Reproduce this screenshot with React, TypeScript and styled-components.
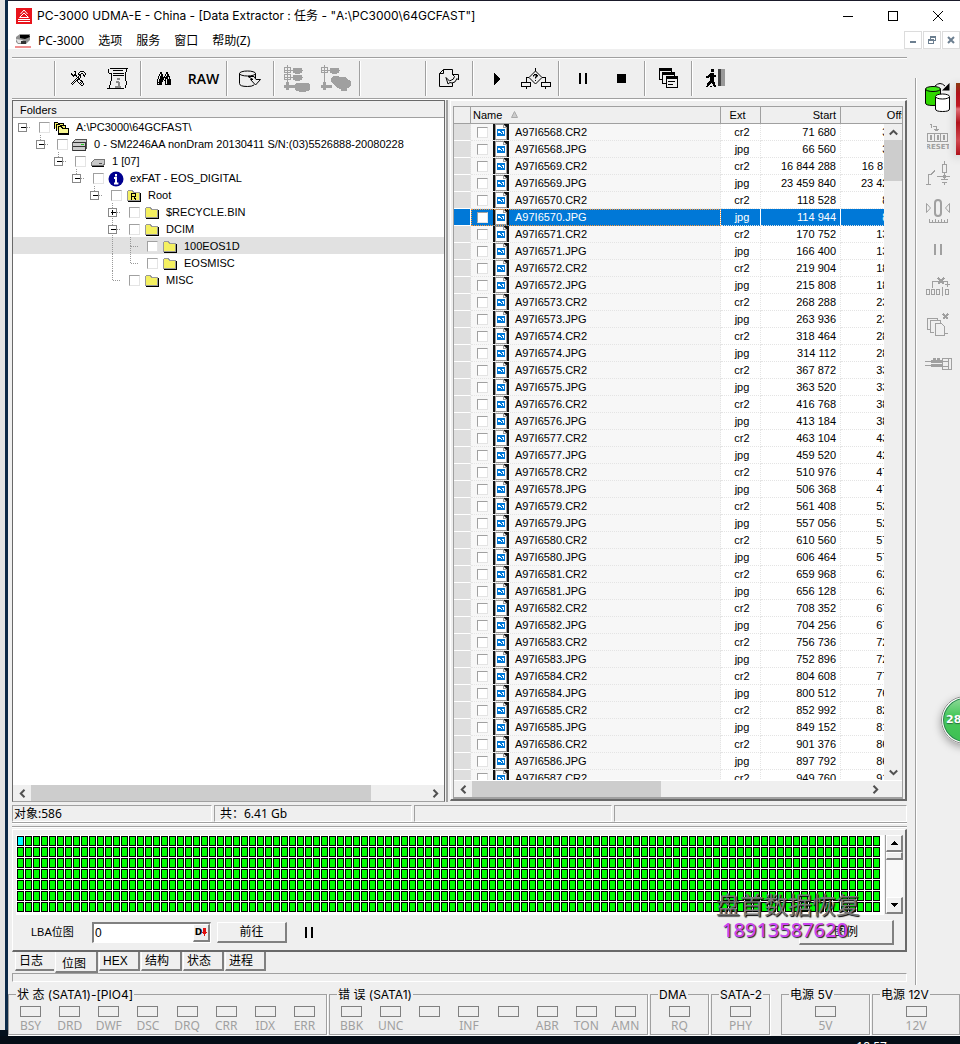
import React from "react";
import styled, { createGlobalStyle, css } from "styled-components";

const GlobalStyle = createGlobalStyle`
  *, *::before, *::after { box-sizing: border-box; }
  body { margin: 0; background: #04101c; }
  button, input { font: inherit; color: inherit; margin: 0; }
  button { padding: 0; border: 0; background: none; }
  svg { display: block; flex: none; }
`;

const face = "#efefef";
const shade = "#a0a0a0";
const dark = "#696969";
const uiFont = `"Noto Sans", "Noto Sans CJK SC", sans-serif`;
const captionFont = `Inter, "Noto Sans CJK SC", sans-serif`;
const listFont = `"Liberation Sans", "Noto Sans CJK SC", sans-serif`;

/* ---------- desktop and window ---------- */

const Desktop = styled.div`
  position: relative;
  display: flex;
  flex-direction: column;
  height: 100vh;
  min-height: 700px;
  overflow: hidden;
  font: 12px/16px ${uiFont};
  color: #000;
`;

const Stage = styled.div`
  display: flex;
  flex: 1;
  min-height: 0;
`;

const BackWindow = styled.div`
  width: 8px;
  margin-bottom: 6px;
  background: #e4e4e4;
  border-right: 3px solid #0c2a48;
`;

const Window = styled.main`
  flex: 1;
  min-width: 0;
  display: flex;
  flex-direction: column;
  background: ${face};
  border-top: 1px solid #1a1a2a;
`;

const Taskbar = styled.footer`
  height: 8px;
  overflow: hidden;
  background: #050d16;
  color: #fff;
  padding: 3px 73px 0 0;
  text-align: right;
`;

const TitleBar = styled.header`
  display: flex;
  align-items: center;
  height: 30px;
  padding-left: 8px;
  background: #fff;
`;

const Title = styled.h1`
  flex: 1;
  margin: 0 0 0 5px;
  font: 400 12px/16px ${captionFont};
  white-space: nowrap;
`;

const CaptionButton = styled.button`
  display: grid;
  place-items: center;
  width: 45px;
  height: 30px;
`;

const MenuBar = styled.nav`
  display: flex;
  align-items: center;
  height: 18px;
  padding-left: 7px;
  background: #fff;
`;

const MenuItem = styled.button`
  margin: 0 7px;
  padding-top: 2px;
  white-space: nowrap;
`;

const MdiButtons = styled.div`
  display: flex;
  gap: 1px;
  margin-left: auto;
`;

const MdiButton = styled.button`
  display: grid;
  place-items: center;
  width: 18px;
  height: 18px;
  border: 1px solid #dcdcdc;
  background: #fff;
`;

const Body = styled.div`
  display: flex;
  flex: 1;
  min-height: 0;
`;

const MainColumn = styled.div`
  flex: 1;
  min-width: 0;
  display: flex;
  flex-direction: column;
  padding: 8px 8px 4px 4px;
`;

/* ---------- toolbar ---------- */

const Toolbar = styled.div`
  display: flex;
  align-items: center;
  height: 43px;
  flex: none;
  border-top: 1px solid ${shade};
  border-bottom: 1px solid #fff;
  box-shadow: inset 0 1px #fff, inset 0 -1px ${shade};
`;

const ToolGroup = styled.div<{ $empty?: number }>`
  display: flex;
  height: 35px;
  padding: 0 3px 0 4px;
  border-right: 1px solid ${shade};
  box-shadow: 1px 0 #fff;
  ${(p) => p.$empty && css`width: ${p.$empty}px;`}
  &:last-child { border: 0; box-shadow: none; }
`;

const ToolButton = styled.button`
  display: grid;
  place-items: center;
  width: 39px;
  height: 35px;
  font: 600 14px/16px "Open Sans", sans-serif;
`;

/* ---------- workspace ---------- */

const Workspace = styled.div`
  flex: 1;
  min-height: 0;
  display: grid;
  grid-template-columns: 433fr 5px 457fr;
  grid-template-rows: minmax(0, 1fr);
`;

const Splitter = styled.div`
  border-left: 2px solid ${shade};
  margin-left: 1px;
`;

const FolderPanel = styled.section`
  display: flex;
  flex-direction: column;
  min-width: 0;
  border: 1px solid ${dark};
  border-bottom-color: ${shade};
  background: #fff;
  font: 11px/17px ${listFont};
`;

const PanelHeading = styled.h2`
  margin: 0;
  height: 17px;
  padding-left: 7px;
  font-size: 11px;
  font-weight: 400;
  line-height: 19px;
  background: ${face};
  border-bottom: 1px solid ${shade};
`;

const Tree = styled.ul`
  flex: 1;
  min-height: 0;
  overflow: hidden;
  list-style: none;
  margin: 0;
  padding: 0;
`;

const TreeRow = styled.li<{ $selected?: boolean }>`
  display: flex;
  align-items: center;
  height: 17px;
  background: ${(p) => (p.$selected ? "#e1e1e1" : "transparent")};
`;

const TreeLabel = styled.label`
  display: flex;
  align-items: center;
  padding: 2px 0 0 8px;
  white-space: nowrap;
  svg { margin: 0 6px 0 4px; }
`;

const Tick = styled.input.attrs({ type: "checkbox" })`
  appearance: none;
  width: 11px;
  height: 11px;
  flex: none;
  background: #fff;
  border: 1px solid #e4e4e4;
  border-top-color: ${shade};
  border-left-color: ${shade};
`;

const HScroll = styled.div`
  display: flex;
  height: 16px;
  flex: none;
  background: ${face};
`;

const ScrollArrow = styled.button`
  display: grid;
  place-items: center;
  width: 18px;
  height: 16px;
  flex: none;
`;

const ScrollTrack = styled.div<{ $vertical?: boolean }>`
  flex: 1;
  display: flex;
  flex-direction: ${(p) => (p.$vertical ? "column" : "row")};
`;

const Thumb = styled.div<{ $size: string }>`
  flex: 0 0 ${(p) => p.$size};
  background: #cdcdcd;
`;

const FileFrame = styled.section`
  display: flex;
  min-width: 0;
  margin-bottom: 1px;
  padding: 5px 2px 0 2px;
  border: 1px solid #fff;
  border-right: 2px solid ${dark};
  border-bottom: 2px solid ${dark};
`;

const FileList = styled.div`
  position: relative;
  flex: 1;
  min-width: 0;
  display: flex;
  flex-direction: column;
  border: 1px solid ${shade};
  border-bottom-width: 2px;
  background: ${face};
  font: 11px/16px ${listFont};
`;

const TableClip = styled.div`
  flex: 1;
  min-height: 0;
  overflow: hidden;
  border-bottom: 1px solid #fff;
`;

const FileTable = styled.table`
  width: calc(100% + 19px);
  table-layout: fixed;
  border-collapse: separate;
  border-spacing: 0;
`;

const Head = styled.th<{ $align?: string }>`
  height: 17px;
  padding: 0 4px 0 2px;
  ${(p) => p.$align === "center" && css`padding: 0 6px 0 0;`}
  font-weight: 400;
  text-align: ${(p) => p.$align || "left"};
  border-right: 1px solid ${shade};
  border-bottom: 1px solid ${shade};
  background: ${face};
  line-height: 16px;
  svg { display: inline-block; margin-left: 9px; vertical-align: 1px; }
`;

const Cell = styled.td<{ $align?: string }>`
  height: 17px;
  padding: 0 4px;
  ${(p) => p.$align === "center" && css`padding-left: 7px;`}
  line-height: 16px;
  text-align: ${(p) => p.$align || "left"};
  background: #fff;
  border-right: 1px dotted #e4e4e4;
  border-bottom: 1px dotted #e4e4e4;
  white-space: nowrap;
`;

const MarkCell = styled(Cell)`
  background: #dedede;
  border-bottom: 1px solid #fff;
`;

const NameCell = styled(Cell)`
  background: #f7f7f7;
  padding-left: 6px;
  label { display: flex; align-items: center; height: 16px; }
  svg { margin: 0 6px 0 5px; }
`;

const FileRow = styled.tr<{ $selected?: boolean }>`
  ${(p) =>
    p.$selected &&
    css`
      ${Cell} {
        background: #0078d7;
        color: #fff;
        border-right: 1px solid #fff;
      }
      ${NameCell} { outline: 1px dotted #ff9a3c; outline-offset: -1px; }
    `}
`;

const ListVScroll = styled.div`
  position: absolute;
  top: 17px;
  right: 0;
  bottom: 17px;
  width: 18px;
  display: flex;
  flex-direction: column;
  background: ${face};
`;

/* ---------- status and bitmap ---------- */

const StatusBar = styled.div`
  display: grid;
  grid-template-columns: 200fr 198fr 198fr 293fr;
  gap: 2px;
  height: 17px;
  flex: none;
  margin-top: 3px;
`;

const StatusCell = styled.div<{ $indent?: boolean }>`
  padding-left: ${(p) => (p.$indent ? "5px" : "1px")};
  border: 1px solid #fff;
  border-top-color: ${shade};
  border-left-color: ${shade};
  line-height: 15px;
`;

const GrooveLine = styled.div`
  flex: none;
  border-top: 1px solid ${shade};
  border-bottom: 1px solid #fff;
  height: 2px;
  & + & { margin-top: 2px; }
`;

const MapFrame = styled.section`
  position: relative;
  flex: none;
  margin-top: 1px;
  padding: 5px 2px 1px 3px;
  border-top: 1px solid #fff;
  border-left: 1px solid #fff;
  border-right: 2px solid ${dark};
  border-bottom: 2px solid ${dark};
`;

const MapRow = styled.div`
  display: flex;
  gap: 1px;
  height: 80px;
`;

const SectorGrid = styled.div`
  flex: 1;
  display: grid;
  grid-template-columns: repeat(auto-fill, 7px);
  grid-auto-rows: 10px;
  gap: 1px;
  overflow: hidden;
  padding: 1px;
  background: #fff;
`;

const Sector = styled.div<{ $current?: boolean }>`
  border: 1px solid #000;
  background: ${(p) => (p.$current ? "#00ffff" : "#00ff00")};
`;

const raised = css`
  background: ${face};
  border: 1px solid #fff;
  border-right: 2px solid #808080;
  border-bottom: 2px solid #808080;
`;

const ClassicVScroll = styled.div`
  width: 18px;
  height: 79px;
  display: flex;
  flex-direction: column;
  background: #f8f8f8;
  border-left: 1px solid ${shade};
`;

const ClassicArrow = styled.button`
  ${raised}
  display: grid;
  place-items: center;
  height: 17px;
`;

const ClassicThumb = styled.div`
  ${raised}
  height: 8px;
  margin-bottom: auto;
`;

const MapControls = styled.div`
  display: flex;
  align-items: center;
  height: 34px;
  padding: 0 9px 0 15px;
  font: 12px/16px ${listFont};
`;

const LbaLabel = styled.label`
  width: 61px;
  font-size: 11px;
`;

const LbaField = styled.div`
  display: flex;
  width: 119px;
  height: 21px;
  margin-right: 6px;
  background: #fff;
  border: 2px solid #808080;
  border-right: 1px solid #fff;
  border-bottom: 1px solid #fff;
`;

const LbaInput = styled.input`
  flex: 1;
  min-width: 0;
  padding: 0 1px;
  border: 0;
  outline: 0;
  background: #fff;
`;

const RadixButton = styled.button`
  ${raised}
  display: flex;
  align-items: center;
  justify-content: center;
  width: 17px;
  font: 700 9px/12px "DejaVu Sans", sans-serif;
`;

const PushButton = styled.button<{ $wide?: boolean }>`
  ${raised}
  width: ${(p) => (p.$wide ? "95px" : "70px")};
  height: ${(p) => (p.$wide ? "25px" : "21px")};
  margin-left: ${(p) => (p.$wide ? "auto" : "0")};
  line-height: 18px;
`;

const PauseButton = styled.button`
  margin-left: 18px;
`;

const Watermark = styled.div`
  position: absolute;
  right: 45px;
  bottom: 8px;
  text-align: center;
  pointer-events: none;
  color: #777;
  font: 24px/28px "Noto Sans CJK SC", sans-serif;
  text-shadow: 1px 1px 1px #000;
`;

const WatermarkPhone = styled.div`
  margin-right: 6px;
  color: #cc44f0;
  font: 500 20px/24px "Noto Sans", sans-serif;
  text-shadow: 1px 1px 1px #222;
`;

const Tabs = styled.div`
  display: flex;
  align-items: flex-start;
  gap: 1px;
  height: 21px;
  flex: none;
  padding-left: 3px;
  font: 12px/19px ${listFont};
`;

const Tab = styled.button<{ $active?: boolean }>`
  height: ${(p) => (p.$active ? "21px" : "19px")};
  width: ${(p) => (p.$active ? "43px" : "41px")};
  padding: ${(p) => (p.$active ? "3px 8px 0 6px" : "0 8px 0 3px")};
  text-align: left;
  white-space: nowrap;
  border: 1px solid #fff;
  border-top: 0;
  border-right: 2px solid #808080;
  border-bottom: 2px solid #808080;
  &:first-child { width: 39px; border-right: 0; }
`;

const Sunken = styled.div`
  flex: none;
  height: 9px;
  border: 1px solid #fff;
  border-top-color: ${shade};
  border-left-color: ${shade};
`;

/* ---------- side bar ---------- */

const SideBar = styled.aside`
  width: 45px;
  margin: 29px 0 1px;
  border-left: 1px solid ${shade};
  box-shadow: inset 1px 0 #fff;
`;

const SideButton = styled.button`
  display: grid;
  place-items: center;
  width: 44px;
  height: 38px;
`;

/* ---------- indicator groups ---------- */

const Groups = styled.div`
  display: grid;
  grid-template-columns:
    minmax(0, 319fr) minmax(0, 319fr) minmax(0, 59fr)
    minmax(0, 59fr) minmax(0, 98fr) minmax(0, 88fr);
  gap: 2px;
  height: 49px;
  flex: none;
  margin-bottom: 1px;
`;

const Group = styled.fieldset<{ $spaced?: boolean }>`
  min-width: 0;
  margin: 0 0 0 ${(p) => (p.$spaced ? "9px" : "0")};
  padding: 0 2px;
  border: 1px solid ${shade};
  box-shadow: 1px 1px #fff;
`;

const Legend = styled.legend`
  margin-left: 5px;
  padding: 1px 1px 0;
  font: 12px/15px ${captionFont};
  white-space: nowrap;
`;

const Leds = styled.div`
  display: flex;
  padding-top: 4px;
`;

const LedItem = styled.div`
  flex: 1;
  min-width: 0;
  display: flex;
  flex-direction: column;
  align-items: center;
  gap: 1px;
  color: #a0a0a0;
`;

const Led = styled.span`
  width: 21px;
  height: 11px;
  border: 1px solid #808080;
`;

/* ---------- floating desktop widgets ---------- */

const RedWidget = styled.div`
  position: absolute;
  top: 83px;
  right: 0;
  width: 4px;
  height: 72px;
  background: linear-gradient(#8a3a10, #b0121c 14%, #c01824 32%, #e07078 36%, #b0121c 55%, #d04850 80%, #b0121c);
  box-shadow: 0 2px 10px rgba(0, 0, 0, 0.3);
`;

const Ball = styled.div`
  position: absolute;
  top: 696px;
  right: -29px;
  width: 48px;
  height: 48px;
  padding-left: 3px;
  border-radius: 50%;
  border: 2px solid #fff;
  outline: 1px solid #8a8a8a;
  outline-offset: -1px;
  background: linear-gradient(#8fd99a, #48c85c 40%, #3cbf52);
  box-shadow: 0 3px 8px rgba(0, 0, 0, 0.35), inset 0 0 0 1px #2a8050;
  color: #fff;
  font: 700 11px/44px "DejaVu Sans", sans-serif;
  text-shadow: 0 1px 1px #2a7040;
`;

/* ---------- icons ---------- */

type IconProps = {
  w: number;
  h: number;
  children: React.ReactNode;
  stroke?: string;
  smooth?: boolean;
};

const Icon = ({ w, h, children, stroke = "#000", smooth }: IconProps) => (
  <svg
    width={w}
    height={h}
    viewBox={`0 0 ${w} ${h}`}
    fill="none"
    stroke={stroke}
    shapeRendering={smooth ? "auto" : "crispEdges"}
    aria-hidden="true"
  >
    {children}
  </svg>
);

/* Turns rows of characters into unit squares; '.' is transparent. */
const Bitmap = ({ rows, colors }: { rows: string[]; colors: Record<string, string> }) => (
  <svg width={rows[0].length} height={rows.length} shapeRendering="crispEdges" aria-hidden="true">
    {Object.keys(colors).map((key) => (
      <path
        key={key}
        fill={colors[key]}
        d={rows
          .flatMap((row, y) => row.split("").map((c, x) => (c === key ? `M${x} ${y}h1v1h-1z` : "")))
          .join("")}
      />
    ))}
  </svg>
);

const AppIcon = () => (
  <Icon w={16} h={16} stroke="#fff" smooth>
    <rect width="16" height="16" fill="#e8141c" stroke="none" />
    <path d="M8 2 4.500 6M8 2l3.500 4M8 5 3.500 9.500h9zM2 11.500h12M2 13.500h12" />
  </Icon>
);

const DriveIcon = () => (
  <Icon w={16} h={15} stroke="none" smooth>
    <path d="M1 4 5 1h10v6l-4 4H3L1 9z" fill="#909090" />
    <path d="M5 2h9l1 2-5 2-5-1z" fill="#000" />
    <path d="M1 6l6 1 4 3H3z" fill="#e4e4e4" />
    <path d="M6 8h5v3H6z" fill="#333" />
    <path d="M0 14h16" stroke="#e02020" />
  </Icon>
);

const ToolsIcon = () => (
  <Bitmap
    colors={{ "#": "#000" }}
    rows={[
      "...##....####...",
      "....#...#....#..",
      "#...#..#..##..#.",
      "##.##..###..#.#.",
      ".#####..##..##..",
      "..#..#.#.#...#..",
      "......##.#......",
      ".....#.##.......",
      "....#.###.......",
      "...#.##..##.....",
      "..#.#.#...##....",
      ".#.#...#.#.#....",
      "#.#.....#.#.#...",
      ".#.......#..#...",
      "..........##....",
    ]}
  />
);

const ScriptIcon = () => (
  <Icon w={23} h={23}>
    <path d="M4 1.500h18M2.500 2v4M3 6.500h3M5.500 7v7M4.500 14v4M3.500 18v3M1 21.500h17M20.500 2v3M19.500 5v9M20.500 14v4M19.500 18v3" />
    <path d="M7 3.500h10M7 6.500h11M7 8.500h11" />
    <path d="M11 12h3M10 15h3M9 20h6M12.500 15v5" stroke="#888" strokeWidth="2" />
  </Icon>
);

const BinocularsIcon = () => (
  <Bitmap
    colors={{ "#": "#000" }}
    rows={[
      "...##....##....",
      "...##....##....",
      "..#.##..#.##...",
      "..#.##..#.##...",
      ".#.###.#.####..",
      ".#.########.#..",
      ".#.####.###.#..",
      "#.#####.#.####.",
      "#.####.##.####.",
      "#.####..#.####.",
      "#####...#.####.",
      "#.###...#.####.",
      "#####...######.",
    ]}
  />
);

const DiskExportIcon = () => (
  <Icon w={23} h={18} smooth>
    <path d="M.5 3.500v10q0 3 8 3 4.500 0 6.500-1.500M16.500 3.500v5" />
    <ellipse cx="8.500" cy="3.500" rx="8" ry="2.500" />
    <path d="M9 6.500h6l2 3h4.500l-5 5.500-5-5.500h2.500z" fill={face} />
  </Icon>
);

const TreeAddIcon = ({ big }: { big?: boolean }) => (
  <Icon w={big ? 31 : 27} h={27} stroke="#a0a0a0">
    <path d="M3.500 0v22M.5 2.500h6v5h-6zM0 5.500h11" />
    {!big && <path d="M.5 9.500h6v5h-6zM0 12.500h11" />}
    <path d="M0 21.500h11M3.500 17v8" strokeWidth="3" />
    <rect x="9" y="3" width="9" height="5" rx="2" fill="#a0a0a0" />
    {big ? (
      <path
        d="M10 13q4-4 9-1 6-1 8 3 5 1 3 5-1 3-4 3v3h-6v-2q-6-1-7-5-4-1-3-6z"
        fill="#a0a0a0"
        stroke="none"
      />
    ) : (
      <>
        <rect x="9" y="10" width="9" height="5" rx="2" fill="#a0a0a0" />
        <rect x="11" y="18" width="15" height="8" rx="4" fill="#a0a0a0" />
      </>
    )}
  </Icon>
);

const PageReturnIcon = () => (
  <Icon w={21} h={19} smooth>
    <path d="M13.500 6V.5h-9l-4 4v13h13V14M4.500.5v4h-4" />
    <path d="M7 8.500l3.500 3.500 2-1q2 0 3-3.500l-2-2h6v5.500l-1.500-1.500q-1.500 4.500-5 4.500l-2-.500-2 1.500z" fill={face} />
  </Icon>
);

const DecisionIcon = () => (
  <svg width="30" height="22" fill="none" stroke="#000" aria-hidden="true">
    <path d="M14.500 0v3M8 9.500 14.500 3 21 9.500 14.500 16z" />
    <path
      d="M5.500 14V9.500H8M24.500 14V9.500H21M.5 14.500h9v4h-9zM20.500 14.500h9v4h-9zM5.500 19v2M24.500 19v2"
      shapeRendering="crispEdges"
    />
    <path d="M12 7h1V6h3v1h1v1.500h-1v1h-1v1h-1v-2h1v-1h-2v1h-1zM14 12h1v1h-1z" fill="#000" stroke="none" />
  </svg>
);

const PlayIcon = () => (
  <Icon w={8} h={12} stroke="none">
    <path d="M1 0l6 6-6 6z" fill="#000" />
  </Icon>
);

const PauseIcon = ({ color = "#000" }: { color?: string }) => (
  <Icon w={8} h={11} stroke={color}>
    <path d="M1 0v11M7 0v11" strokeWidth="2" />
  </Icon>
);

const StopIcon = () => (
  <Icon w={9} h={9} stroke="none">
    <rect width="9" height="9" fill="#000" />
  </Icon>
);

const CascadeIcon = () => (
  <Icon w={20} h={21}>
    <path d="M.5 11.500V.5h12v3M.5 2.500h12M.5 11.500H3" />
    <path d="M3.500 15.500v-11h12v3M3.500 6.500h12M3.500 15.500H7" />
    <path d="M7.500 8.500h11v11h-11zM8 10.500h11M9 13.500h7M9 16.500h5" />
    <path d="M0 1.500h13M3 5.500h13M7 9.500h12" />
  </Icon>
);

const ExitIcon = () => (
  <Icon w={19} h={19} stroke="none">
    <path
      d="M5 0h3v3H5zM4 4h4v2h2v2H8v3l1 3 1 3H7l-1-4-3 4H1v-2l3-4V8L2 9H0V7h2zM0 17h2v1H0zM4 17h2v1H4zM8 17h2v1H8z"
      fill="#000"
    />
    <path d="M12 0h3v17h-3z" fill="#444" />
    <path d="M15 0h4v17h-4z" fill="#999" />
  </Icon>
);

const FolderIcon = ({ letter }: { letter?: boolean }) => (
  <Icon w={16} h={14}>
    <path d="M1.500 11.500v-9l1-1h4l1 2h6v8z" fill="#f4f060" stroke="#999" />
    <path d="M2 12.500h12.500V4" stroke="#000" />
    {letter && <path d="M5.500 11V4.500h4v3h-4M8 8l2 3" />}
  </Icon>
);

const FoldersIcon = () => (
  <Icon w={16} h={14}>
    <path d="M.5 7.500v-6h3l1 1h5v2" fill="#f4f060" />
    <path d="M2.500 9.500v-6h3l1 1h5v2" fill="#f4f060" />
    <path d="M4.500 12.500v-7h3l1 2h6v5z" fill="#f8f690" />
    <path d="M4 13.500h11" />
  </Icon>
);

const DiskIcon = ({ flat }: { flat?: boolean }) => (
  <Icon w={16} h={14}>
    {flat ? (
      <>
        <path d="M1.500 7.500l3-3h10v4l-1 2h-12z" fill="#c8c8c8" stroke="#777" />
        <path d="M2 11.500h12" />
        <path d="M9 8.500h3" stroke="#555" />
      </>
    ) : (
      <>
        <path d="M.5 4.500l3-3h11v9l-2 2h-12z" fill="#ccc" stroke="#555" />
        <path d="M1 4.500h12M1 8.500h12M13.500 4v8M1 12.500h13" stroke="#333" />
        <path d="M9 6.500h3" stroke="#2c2" />
      </>
    )}
  </Icon>
);

const InfoIcon = () => (
  <Icon w={16} h={16} smooth stroke="#fff">
    <circle cx="8" cy="8" r="7.500" fill="#000090" stroke="none" />
    <path d="M8 3v2.400M6 7h2v5M6 12.400h4.400" strokeWidth="2" />
  </Icon>
);

const PhotoIcon = () => (
  <Icon w={16} h={16} stroke="none">
    <rect width="16" height="16" fill="#111" />
    <path d="M2.500.5h8l3 3v12h-11z" fill="#fff" stroke="#999" />
    <path d="M10 1h1v2h2v1h-3z" fill="#999" />
    <rect x="4" y="5" width="8" height="7" fill="#0078d7" />
    <path d="M5 9V7h2v1h1v1h1V7h2v3h-1V8h-1v2H8V9H6z" fill="#fff" />
  </Icon>
);

const Chevron = ({ d }: { d: string }) => (
  <Icon w={9} h={9} stroke="#505050" smooth>
    <path d={d} strokeWidth="2" />
  </Icon>
);
const chevrons = {
  left: "M6.5.8 2.8 4.5l3.7 3.7",
  right: "M2.5.8l3.7 3.7-3.7 3.7",
  up: "M.8 6.5 4.5 2.8l3.7 3.7",
  down: "M.8 2.5l3.7 3.7 3.7-3.7",
};

const CopyDisksIcon = () => (
  <Icon w={26} h={31} smooth>
    <path d="M10 4q5-5 10 0" />
    <path d="M24.500 1v7.500H17z" fill="#000" stroke="none" />
    <path d="M.5 7v14q0 2.500 7.500 2.500T15.500 21V7" fill="#30d800" />
    <ellipse cx="8" cy="7" rx="7.500" ry="2.500" fill="#40e818" />
    <path d="M10.500 15v12q0 2.500 7 2.500t7-2.500V15" fill="#fff" />
    <ellipse cx="17.500" cy="14.500" rx="7" ry="2.500" fill="#fff" />
  </Icon>
);

const ResetIcon = () => (
  <svg width="22" height="27" shapeRendering="crispEdges" fill="none" stroke={shade} aria-hidden="true">
    <path d="M3 2.500h1.500V6M6 4.500h3.500V9M7 7.500h5M8 8.500h3M.5 11.500h20v8H.5zM7.500 11v8M13.500 11v8M3.500 13.500h1v4h-1zM10.500 13.500h1v4h-1zM16.500 13.500h1v4h-1z" />
    <text x="11" y="27" textAnchor="middle" fill={shade} stroke="none" fontFamily="DejaVu Sans" fontSize="7" fontWeight="700">
      RESET
    </text>
  </svg>
);

const SwitchIcon = () => (
  <Icon w={24} h={25} stroke={shade}>
    <path d="M0 23.500h5M2.500 23V13.500H5l4-4M18.500 0v3M16.500 3.500h4v8h-4zM18.500 12v6M11 15.500h13M15 18.500h7M16 21.500h5M18.500 21v3M17 14.500h3M17 16.500h3" />
  </Icon>
);

const ZeroIcon = () => (
  <Icon w={24} h={26} stroke={shade} smooth>
    <path d="M.5 5.500v9l4-4.500zM23.500 5.500v9l-4-4.500z" />
    <path
      d="M3.500 21v3.500h18V21M6.500 22v2M9.500 21v3M12.500 22v2M15.500 21v3M18.500 22v2"
      shapeRendering="crispEdges"
    />
    <rect x="9" y="2" width="6" height="16" rx="3" strokeWidth="2" />
  </Icon>
);

const BlocksIcon = () => (
  <Icon w={24} h={20} stroke={shade}>
    <path d="M.5 12.500h3v5h-3zM5.500 12.500h3v5h-3zM10.500 12.500h3v5h-3zM16.500 10v9M19.500 12.500h3v5h-3zM6.500 11V4.500h15V10M19 7.500h5" />
    <path d="M12 1l6 6M18 1l-6 6" strokeWidth="2" />
  </Icon>
);

const PagesIcon = () => (
  <Icon w={24} h={25} stroke={shade}>
    <path d="M4.500 16.500h-3v-11h10v2M7.500 19.500h-3v-12h10v2M9.500 22.500v-12h6l3 3v9zM18 20.500h4" />
    <path d="M17 1l5 5M22 1l-5 5" strokeWidth="2" />
  </Icon>
);

const PlugIcon = () => (
  <Icon w={27} h={13} stroke={shade}>
    <path d="M0 4.500h8M0 8.500h8M17 4.500h6M17 9.500h6M17.500 1v11M23.500 1v11M17 1.500h10M17 12.500h10M26.500 1v11" />
    <path d="M6 4h11M6 8.500h11M9 1v2M13 1v2" strokeWidth="3" />
  </Icon>
);

/* ---------- data ---------- */

type Node = {
  id: string;
  level: number;
  text: string;
  icon: React.ReactNode;
  box?: "+" | "-";
  down?: boolean;
  through?: number;
  selected?: boolean;
};

const nodes: Node[] = [
  { id: "task", level: 0, text: "A:\\PC3000\\64GCFAST\\", icon: <FoldersIcon />, box: "-" },
  { id: "disk", level: 1, text: "0 - SM2246AA nonDram 20130411 S/N:(03)5526888-20080228", icon: <DiskIcon />, box: "-" },
  { id: "part", level: 2, text: "1 [07]", icon: <DiskIcon flat />, box: "-" },
  { id: "vol", level: 3, text: "exFAT - EOS_DIGITAL", icon: <InfoIcon />, box: "-" },
  { id: "root", level: 4, text: "Root", icon: <FolderIcon letter />, box: "-" },
  { id: "bin", level: 5, text: "$RECYCLE.BIN", icon: <FolderIcon />, box: "+", down: true },
  { id: "dcim", level: 5, text: "DCIM", icon: <FolderIcon />, box: "-", down: true },
  { id: "eos1d", level: 6, text: "100EOS1D", icon: <FolderIcon />, down: true, through: 5, selected: true },
  { id: "eosmisc", level: 6, text: "EOSMISC", icon: <FolderIcon />, through: 5 },
  { id: "misc", level: 5, text: "MISC", icon: <FolderIcon /> },
];

const Connector = ({ node }: { node: Node }) => {
  const x = node.level * 18 + 9.5;
  return (
    <svg width={node.level * 18 + 18} height="17" shapeRendering="crispEdges" fill="none" aria-hidden="true">
      <g stroke="#999" strokeDasharray="1 1">
        {node.level > 0 && <path d={`M${x} 0v9`} />}
        {node.down && <path d={`M${x} 9v8`} />}
        {node.through && <path d={`M${node.through * 18 + 9.5} 0v17`} />}
        <path d={`M${x} 9.5h9`} />
      </g>
      {node.box && (
        <>
          <rect x={x - 4} y="5.5" width="8" height="8" fill="#fff" stroke="#888" />
          <path d={`M${x - 2} 9.5h5${node.box === "+" ? `M${x} 7v5` : ""}`} stroke="#000" />
        </>
      )}
    </svg>
  );
};

const starts = [
  71680, 66560, 16844288, 23459840, 118528, 114944, 170752, 166400, 219904, 215808, 268288, 263936,
  318464, 314112, 367872, 363520, 416768, 413184, 463104, 459520, 510976, 506368, 561408, 557056,
  610560, 606464, 659968, 656128, 708352, 704256, 756736, 752896, 804608, 800512, 852992, 849152,
  901376, 897792, 949760,
];
const PARTITION_OFFSET = 32768;
const group3 = (n: number) => String(n).replace(/\B(?=(\d{3})+$)/g, " ");
const files = starts.map((start, i) => {
  const raw = i % 2 === 0;
  return {
    name: `A97I${6568 + Math.floor(i / 2)}.${raw ? "CR2" : "JPG"}`,
    ext: raw ? "cr2" : "jpg",
    start: group3(start),
    offset: group3(start - PARTITION_OFFSET),
  };
});
const SELECTED_FILE = "A97I6570.JPG";

const ledGroups = [
  { title: "状 态 (SATA1)-[PIO4]", leds: ["BSY", "DRD", "DWF", "DSC", "DRQ", "CRR", "IDX", "ERR"] },
  { title: "错 误 (SATA1)", leds: ["BBK", "UNC", "", "INF", "", "ABR", "TON", "AMN"] },
  { title: "DMA", leds: ["RQ"] },
  { title: "SATA-2", leds: ["PHY"] },
  { title: "电源 5V", leds: ["5V"], spaced: true },
  { title: "电源 12V", leds: ["12V"] },
];

const sideTools = [
  { label: "Copy", icon: <CopyDisksIcon /> },
  { label: "Reset", icon: <ResetIcon /> },
  { label: "Power", icon: <SwitchIcon /> },
  { label: "Recalibrate", icon: <ZeroIcon /> },
  { label: "Pause", icon: <PauseIcon color={shade} /> },
  { label: "Blocks", icon: <BlocksIcon /> },
  { label: "Pages", icon: <PagesIcon /> },
  { label: "Connector", icon: <PlugIcon /> },
];

const Tool = ({ label, children }: { label: string; children: React.ReactNode }) => (
  <ToolButton type="button" aria-label={label}>
    {children}
  </ToolButton>
);

/* ---------- page ---------- */

export default function App() {
  return (
    <>
      <GlobalStyle />
      <Desktop>
        <Stage>
          <BackWindow />
          <Window>
            <TitleBar>
              <AppIcon />
              <Title>PC-3000 UDMA-E - China - [Data Extractor : 任务 - "A:\PC3000\64GCFAST"]</Title>
              <CaptionButton aria-label="Minimize">
                <Icon w={10} h={10}><path d="M0 5.5h10" /></Icon>
              </CaptionButton>
              <CaptionButton aria-label="Maximize">
                <Icon w={10} h={10}><path d="M.5.5h9v9h-9z" /></Icon>
              </CaptionButton>
              <CaptionButton aria-label="Close">
                <Icon w={10} h={10} smooth><path d="M0 0l10 10M10 0 0 10" /></Icon>
              </CaptionButton>
            </TitleBar>
            <MenuBar>
              <DriveIcon />
              {["PC-3000", "选项", "服务", "窗口", "帮助(Z)"].map((m) => (
                <MenuItem key={m} type="button">{m}</MenuItem>
              ))}
              <MdiButtons>
                <MdiButton aria-label="Minimize document">
                  <Icon w={8} h={8} stroke="#6c7f90"><path d="M1 6h6" strokeWidth="2" /></Icon>
                </MdiButton>
                <MdiButton aria-label="Restore document">
                  <Icon w={8} h={8} stroke="#6c7f90">
                    <path d="M2.5 3V.5h5v4H6M2 1.5h6M.5 3.5h5v4h-5zM0 4.5h6" />
                  </Icon>
                </MdiButton>
                <MdiButton aria-label="Close document">
                  <Icon w={8} h={8} stroke="#6c7f90" smooth>
                    <path d="M1 1l6 6M7 1 1 7" strokeWidth="2" />
                  </Icon>
                </MdiButton>
              </MdiButtons>
            </MenuBar>

            <Body>
              <MainColumn>
                <Toolbar>
                  <ToolGroup $empty={43} />
                  <ToolGroup>
                    <Tool label="Settings"><ToolsIcon /></Tool>
                    <Tool label="Script"><ScriptIcon /></Tool>
                  </ToolGroup>
                  <ToolGroup>
                    <Tool label="Find"><BinocularsIcon /></Tool>
                    <Tool label="Raw recovery">RAW</Tool>
                  </ToolGroup>
                  <ToolGroup>
                    <Tool label="Save data"><DiskExportIcon /></Tool>
                  </ToolGroup>
                  <ToolGroup>
                    <Tool label="Add to tree"><TreeAddIcon /></Tool>
                    <Tool label="Add group to tree"><TreeAddIcon big /></Tool>
                  </ToolGroup>
                  <ToolGroup $empty={66} />
                  <ToolGroup>
                    <Tool label="Reopen"><PageReturnIcon /></Tool>
                  </ToolGroup>
                  <ToolGroup>
                    <Tool label="Start"><PlayIcon /></Tool>
                    <Tool label="Conditions"><DecisionIcon /></Tool>
                  </ToolGroup>
                  <ToolGroup>
                    <Tool label="Pause"><PauseIcon /></Tool>
                    <Tool label="Stop"><StopIcon /></Tool>
                  </ToolGroup>
                  <ToolGroup>
                    <Tool label="Windows"><CascadeIcon /></Tool>
                  </ToolGroup>
                  <ToolGroup>
                    <Tool label="Exit"><ExitIcon /></Tool>
                  </ToolGroup>
                </Toolbar>

                <Workspace>
                  <FolderPanel>
                    <PanelHeading>Folders</PanelHeading>
                    <Tree>
                      {nodes.map((n) => (
                        <TreeRow key={n.id} $selected={n.selected}>
                          <Connector node={n} />
                          <TreeLabel>
                            <Tick />
                            {n.icon}
                            {n.text}
                          </TreeLabel>
                        </TreeRow>
                      ))}
                    </Tree>
                    <HScroll>
                      <ScrollArrow aria-label="Scroll left"><Chevron d={chevrons.left} /></ScrollArrow>
                      <ScrollTrack><Thumb $size="86%" /></ScrollTrack>
                      <ScrollArrow aria-label="Scroll right"><Chevron d={chevrons.right} /></ScrollArrow>
                    </HScroll>
                  </FolderPanel>
                  <Splitter />
                  <FileFrame>
                    <FileList>
                      <TableClip>
                        <FileTable>
                          <colgroup>
                            <col style={{ width: 17 }} />
                            <col />
                            <col style={{ width: 40 }} />
                            <col style={{ width: 80 }} />
                            <col style={{ width: 80 }} />
                          </colgroup>
                          <thead>
                            <tr>
                              <Head />
                              <Head>
                                Name
                                <Icon w={7} h={7} stroke="#aaa" smooth>
                                  <path d="M3.500.5.5 6.500h6z" fill="#ccc" />
                                </Icon>
                              </Head>
                              <Head $align="center">Ext</Head>
                              <Head $align="right">Start</Head>
                              <Head $align="right">Offset</Head>
                            </tr>
                          </thead>
                          <tbody>
                            {files.map((f) => (
                              <FileRow key={f.name} $selected={f.name === SELECTED_FILE}>
                                <MarkCell />
                                <NameCell>
                                  <label>
                                    <Tick />
                                    <PhotoIcon />
                                    {f.name}
                                  </label>
                                </NameCell>
                                <Cell $align="center">{f.ext}</Cell>
                                <Cell $align="right">{f.start}</Cell>
                                <Cell $align="right">{f.offset}</Cell>
                              </FileRow>
                            ))}
                          </tbody>
                        </FileTable>
                      </TableClip>
                      <ListVScroll>
                        <ScrollArrow aria-label="Scroll up"><Chevron d={chevrons.up} /></ScrollArrow>
                        <ScrollTrack $vertical><Thumb $size="41px" /></ScrollTrack>
                        <ScrollArrow aria-label="Scroll down"><Chevron d={chevrons.down} /></ScrollArrow>
                      </ListVScroll>
                      <HScroll>
                        <ScrollArrow aria-label="Scroll left"><Chevron d={chevrons.left} /></ScrollArrow>
                        <ScrollTrack><Thumb $size="48%" /></ScrollTrack>
                        <ScrollArrow aria-label="Scroll right"><Chevron d={chevrons.right} /></ScrollArrow>
                        <ScrollArrow as="span" />
                      </HScroll>
                    </FileList>
                  </FileFrame>
                </Workspace>

                <StatusBar>
                  <StatusCell>对象:586</StatusCell>
                  <StatusCell $indent>共：6.41 Gb</StatusCell>
                  <StatusCell />
                  <StatusCell />
                </StatusBar>
                <GrooveLine />
                <GrooveLine />

                <MapFrame>
                  <MapRow>
                    <SectorGrid>
                      {Array.from({ length: 756 }, (_, i) => (
                        <Sector key={i} $current={i === 0} />
                      ))}
                    </SectorGrid>
                    <ClassicVScroll>
                      <ClassicArrow aria-label="Previous rows">
                        <Icon w={7} h={4} stroke="none"><path d="M0 4l3.500-4L7 4z" fill="#000" /></Icon>
                      </ClassicArrow>
                      <ClassicThumb />
                      <ClassicArrow aria-label="Next rows">
                        <Icon w={7} h={4} stroke="none"><path d="M0 0l3.500 4L7 0z" fill="#000" /></Icon>
                      </ClassicArrow>
                    </ClassicVScroll>
                  </MapRow>
                  <MapControls>
                    <LbaLabel htmlFor="lba">LBA位图</LbaLabel>
                    <LbaField>
                      <LbaInput id="lba" defaultValue="0" />
                      <RadixButton type="button" aria-label="Decimal">
                        D
                        <Icon w={5} h={8} stroke="none">
                          <path d="M1 0h3v4h1L2.500 8 0 4h1z" fill="#e01010" />
                        </Icon>
                      </RadixButton>
                    </LbaField>
                    <PushButton type="button">前往</PushButton>
                    <PauseButton aria-label="Pause map"><PauseIcon /></PauseButton>
                    <PushButton type="button" $wide>图例</PushButton>
                  </MapControls>
                  <Watermark>
                    盘首数据恢复
                    <WatermarkPhone>18913587620</WatermarkPhone>
                  </Watermark>
                </MapFrame>

                <Tabs role="tablist">
                  {["日志", "位图", "HEX", "结构", "状态", "进程"].map((t) => (
                    <Tab key={t} role="tab" $active={t === "位图"} aria-selected={t === "位图"}>
                      {t}
                    </Tab>
                  ))}
                </Tabs>
                <Sunken />
              </MainColumn>

              <SideBar>
                {sideTools.map((s) => (
                  <SideButton key={s.label} type="button" aria-label={s.label}>
                    {s.icon}
                  </SideButton>
                ))}
              </SideBar>
            </Body>

            <Groups>
              {ledGroups.map((g) => (
                <Group key={g.title} $spaced={g.spaced}>
                  <Legend>{g.title}</Legend>
                  <Leds>
                    {g.leds.map((l, i) => (
                      <LedItem key={i}>
                        <Led />
                        {l}
                      </LedItem>
                    ))}
                  </Leds>
                </Group>
              ))}
            </Groups>
          </Window>
        </Stage>
        <Taskbar>18:57</Taskbar>
        <RedWidget />
        <Ball>28</Ball>
      </Desktop>
    </>
  );
}
